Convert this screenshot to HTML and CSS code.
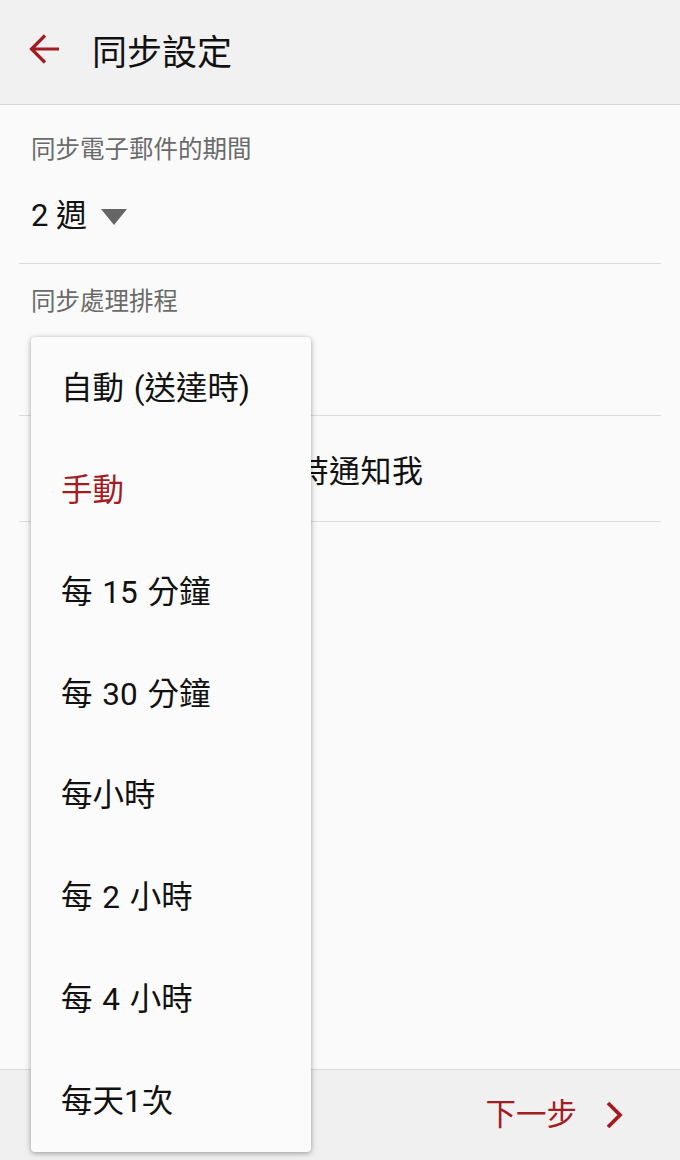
FILE: index.html
```html
<!DOCTYPE html>
<html lang="zh-Hant">
<head>
<meta charset="utf-8">
<title>同步設定</title>
<link rel="stylesheet" href="styles.css">
</head>
<body>
<div class="screen">
  <header class="appbar">
    <svg class="back" width="36" height="36" viewBox="0 0 36 36" aria-hidden="true">
      <path d="M31 16H4M17 2.5L3.5 16L17 29.5" fill="none" stroke="#a31c22" stroke-width="3.2" stroke-linecap="butt" stroke-linejoin="miter"/>
    </svg>
    <h1 class="title">同步設定</h1>
  </header>

  <main class="content">
    <section class="group group-first">
      <div class="label">同步電子郵件的期間</div>
      <div class="value">
        <span>2 週</span>
        <svg class="caret" width="26" height="16" viewBox="0 0 26 16" aria-hidden="true">
          <path d="M0 0H26L13 16Z" fill="#666"/>
        </svg>
      </div>
    </section>
    <section class="group group-second">
      <div class="label">同步處理排程</div>
    </section>
    <section class="row">
      <span class="check" aria-hidden="true"></span>
      <span class="row-text">新電子郵件送達時通知我</span>
    </section>
  </main>

  <footer class="bottombar">
    <div class="next">
      <span>下一步</span>
      <svg class="chev" width="20" height="28" viewBox="0 0 20 28" aria-hidden="true">
        <path d="M3 2L15 14L3 26" fill="none" stroke="#a31c22" stroke-width="3.8"/>
      </svg>
    </div>
  </footer>

  <ul class="menu">
    <li class="item">自動 (送達時)</li>
    <li class="item selected">手動</li>
    <li class="item">每 15 分鐘</li>
    <li class="item">每 30 分鐘</li>
    <li class="item">每小時</li>
    <li class="item">每 2 小時</li>
    <li class="item">每 4 小時</li>
    <li class="item">每天1次</li>
  </ul>
</div>
</body>
</html>
```

FILE: styles.css
```css
* { box-sizing: border-box; }
html, body {
  margin: 0;
  padding: 0;
  background: #fafafa;
}
body {
  font-family: Roboto, "Noto Sans CJK TC", "Noto Sans", sans-serif;
  color: #111;
}
.screen {
  position: relative;
  width: 680px;
  height: 1160px;
  display: flex;
  flex-direction: column;
  overflow: hidden;
}
.appbar {
  height: 105px;
  flex: none;
  background: #f1f1f1;
  border-bottom: 1px solid #d6d6d6;
  display: flex;
  align-items: center;
  padding-left: 28px;
}
.back {
  display: block;
  margin-top: -2px;
}
.title {
  margin: 3px 0 0 28px;
  font-size: 35px;
  font-weight: 400;
  line-height: 40px;
  color: #111;
}
.content {
  flex: 1;
  background: #fafafa;
  display: flex;
  flex-direction: column;
}
.group, .row {
  margin: 0 19px;
  padding: 0 12px;
  border-bottom: 1px solid #dcdcdc;
}
.group-first {
  height: 159px;
  padding-top: 30px;
}
.group-second {
  height: 152px;
  padding-top: 23px;
}
.label {
  font-size: 24.5px;
  line-height: 30px;
  color: #6a6a6a;
}
.value {
  display: flex;
  align-items: center;
  gap: 14px;
  margin-top: 31px;
  height: 40px;
  font-size: 31px;
  line-height: 40px;
  color: #111;
}
.caret { display: block; margin-top: 2px; }
.row {
  height: 106px;
  display: flex;
  align-items: center;
  gap: 12px;
  padding-top: 6px;
}
.check {
  width: 34px;
  height: 34px;
  border: 2px solid #8a8a8a;
  border-radius: 3px;
  flex: none;
}
.row-text {
  font-size: 31px;
  line-height: 40px;
  letter-spacing: 0.5px;
}
.bottombar {
  height: 91px;
  flex: none;
  background: #f0f0f0;
  border-top: 1px solid #d9d9d9;
  display: flex;
  align-items: center;
  justify-content: flex-end;
  padding-right: 55px;
}
.next {
  display: flex;
  align-items: center;
  gap: 28px;
  color: #a31c22;
  font-size: 30.5px;
  line-height: 40px;
}
.chev { display: block; }
.menu {
  position: absolute;
  left: 31px;
  top: 337px;
  width: 280px;
  height: 815px;
  margin: 0;
  padding: 0;
  list-style: none;
  background: #fbfbfb;
  border-radius: 4px;
  box-shadow: 0 1px 4px rgba(0,0,0,0.28), 0 2px 10px rgba(0,0,0,0.12);
  display: flex;
  flex-direction: column;
}
.item {
  height: 101.875px;
  display: flex;
  align-items: center;
  padding-left: 30px;
  padding-top: 2px;
  font-size: 31.5px;
  line-height: 40px;
  word-spacing: 2px;
  color: #111;
  white-space: nowrap;
}
.item.selected { color: #a31c22; }
```
